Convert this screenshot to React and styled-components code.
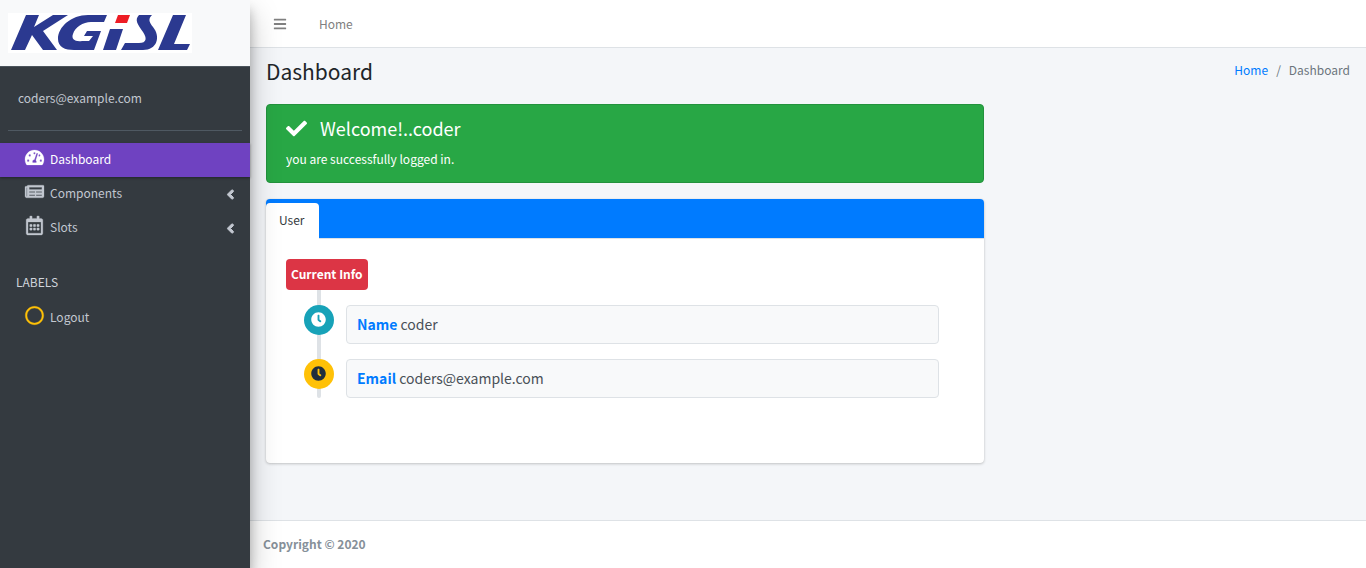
import React from "react";
import styled, { createGlobalStyle } from "styled-components";
import {
  FaAngleLeft,
  FaBars,
  FaCheck,
  FaClock,
  FaNewspaper,
  FaRegCalendarAlt,
  FaRegCircle,
  FaTachometerAlt,
} from "react-icons/fa";

const GlobalStyle = createGlobalStyle`
  *, *::before, *::after { box-sizing: border-box; }
  body {
    margin: 0;
    background: #f4f6f9;
    color: #212529;
    font-family: "Source Sans Pro", "Noto Sans CJK SC", "Noto Sans", sans-serif;
    font-size: 12px;
    line-height: 20px;
  }
  h1, h2, p, ul, ol { margin: 0; padding: 0; font-weight: 400; }
  ul, ol { list-style: none; }
  a { color: #007bff; text-decoration: none; }
  button { font: inherit; border: 0; background: none; padding: 0; cursor: pointer; }
`;

const Page = styled.div`
  display: flex;
  min-height: 100vh;
`;

const Sidebar = styled.aside`
  flex: 0 0 250px;
  background: #343a40;
  color: #c2c7d0;
  box-shadow: 0 14px 28px rgba(0, 0, 0, 0.25), 0 10px 10px rgba(0, 0, 0, 0.22);
  z-index: 1;
`;

const Brand = styled.a`
  display: block;
  height: 67px;
  padding: 13px 8px;
  background: #f8f9fa;
  border-bottom: 1px solid #4b545c;
`;

const Logo = styled.svg`
  display: block;
  width: 184px;
  height: 40px;
  background: #fff;
`;

const UserPanel = styled.div`
  margin: 0 8px 12px;
  padding: 21px 10px 22px;
  border-bottom: 1px solid #4f5962;
`;

const NavHeader = styled.h2`
  padding: 27px 16px 9px;
  font-size: 12px;
  line-height: 20px;
  color: #d0d4db;
`;

const NavLink = styled.a`
  display: flex;
  align-items: center;
  height: 34px;
  padding: 0 12px 0 24px;
  color: ${(p) => (p.$active ? "#fff" : "#c2c7d0")};
  background: ${(p) => (p.$active ? "#6f42c1" : "transparent")};
  box-shadow: ${(p) =>
    p.$active ? "0 1px 3px rgba(0, 0, 0, 0.12), 0 1px 2px rgba(0, 0, 0, 0.24)" : "none"};
`;

const NavText = styled.span`
  flex: 1;
  padding-bottom: 2px;
`;

const NavIcon = styled.i`
  display: flex;
  justify-content: center;
  width: 21px;
  margin-right: 5px;
  padding-bottom: 5px;
  font-size: 19px;
  color: ${(p) => p.$color || "inherit"};

  svg {
    flex: none;
    width: auto;
    overflow: visible;
    stroke-width: 8px;
  }
`;

const TreeArrow = styled(FaAngleLeft)`
  font-size: 15px;
  stroke-width: 34px;
`;

const Main = styled.div`
  flex: 1;
  min-width: 0;
  display: flex;
  flex-direction: column;
`;

const TopBar = styled.header`
  display: flex;
  align-items: center;
  gap: 32px;
  height: 48px;
  padding: 0 23px;
  background: #fff;
  border-bottom: 1px solid #dee2e6;
  color: #808080;

  a, button { color: inherit; }
  svg { display: block; }
`;

const Content = styled.main`
  flex: 1;
  padding: 8px 16px 16px;
`;

const TitleRow = styled.div`
  display: flex;
  justify-content: space-between;
  align-items: flex-start;
  margin-bottom: 16px;
`;

const Title = styled.h1`
  font-size: 21px;
  line-height: 30px;
  padding-bottom: 2px;
`;

const Breadcrumb = styled.ol`
  display: flex;
  padding-top: 4px;
  color: #6c757d;

  li + li::before { content: "/"; padding: 0 8px; }
`;

const Row = styled.div`
  display: flex;
  margin: 0 -8px;
`;

const Column = styled.div`
  flex: 0 0 66.6667%;
  padding: 0 7px 0 8px;
`;

const Alert = styled.section`
  margin-bottom: 16px;
  padding: 11px 19px 13px;
  color: #fff;
  background: #28a745;
  border: 1px solid #23923d;
  border-radius: 4px;
`;

const AlertTitle = styled.h2`
  display: flex;
  align-items: center;
  gap: 13px;
  margin-bottom: 9px;
  font-size: 18px;
  line-height: 24px;
`;

const Card = styled.section`
  background: #fff;
  border-radius: 4px;
  box-shadow: 0 0 1px rgba(0, 0, 0, 0.13), 0 1px 3px rgba(0, 0, 0, 0.2);
`;

const TabBar = styled.div`
  padding-top: 4px;
  background: #007bff;
  border-bottom: 1px solid #dee2e6;
  border-radius: 4px 4px 0 0;
`;

const Tab = styled.button`
  display: block;
  height: 36px;
  margin-bottom: -1px;
  padding: 0 14px 2px 13px;
  background: #fff;
  border-radius: 4px 4px 0 0;
  color: #343a40;
`;

const CardBody = styled.div`
  padding: 20px 20px 65px;
`;

const Timeline = styled.div`
  position: relative;

  &::before {
    content: "";
    position: absolute;
    top: 0;
    bottom: 0;
    left: 31px;
    width: 4px;
    border-radius: 4px;
    background: #dee2e6;
  }
`;

const TimeLabel = styled.div`
  position: relative;
  width: max-content;
  margin-bottom: 15px;
  padding: 5px 5px 6px;
  border-radius: 4px;
  background: #dc3545;
  color: #fff;
  font-weight: 700;
`;

const Entry = styled.div`
  position: relative;
  display: flex;
  align-items: flex-start;
  gap: 12px;
  margin: 0 25px 0 18px;

  & + & { margin-top: 15px; }
`;

const Dot = styled.span`
  display: grid;
  place-items: center;
  width: 30px;
  height: 30px;
  padding: 0 1px 1px 0;
  border-radius: 50%;
  font-size: 15px;
  color: ${(p) => (p.$warning ? "#1f2d3d" : "#fff")};
  background: ${(p) => (p.$warning ? "#ffc107" : "#17a2b8")};
`;

const EntryBox = styled.p`
  flex: 1;
  padding: 8px 10px;
  border: 1px solid #dee2e6;
  border-radius: 4px;
  background: #f8f9fa;
  color: #495057;
  font-size: 14px;
  line-height: 21px;

  b { color: #007bff; }
`;

const Footer = styled.footer`
  padding: 13px 13px 14px;
  background: #fff;
  border-top: 1px solid #dee2e6;
  color: #869099;
  font-weight: 700;
`;

function KgislLogo() {
  return (
    <Logo viewBox="0 0 184 40" role="img" aria-label="KGiSL">
      <g fill="#2b3990">
        <path d="M18 2H31L26 14L45 2H60L35 18L49 37H35L24 22L17 37H3Z" />
        <path d="M99 2H80C63 2 50 14 50 26C50 34 57 37 66 37H86L93 18H79L76 23H85L81 28H74C67 29 63 26 65 21C67 14 75 9 83 9H96Z" />
        <path d="M102 16H115L108 37H95Z" />
        <path d="M131 2H144C140 6 141 9 145 14C153 24 149 37 135 37H113L117 30H131C139 30 139 25 135 19C130 12 126 7 131 2Z" />
        <path d="M165 2H178L166 31H182L179 37H150Z" />
      </g>
      <path d="M110 2H122L119 10H107Z" fill="#ed1c24" />
    </Logo>
  );
}

const links = [
  { label: "Dashboard", Icon: FaTachometerAlt, active: true },
  { label: "Components", Icon: FaNewspaper, tree: true },
  { label: "Slots", Icon: FaRegCalendarAlt, tree: true },
];

export default function App() {
  return (
    <>
      <GlobalStyle />
      <Page>
        <Sidebar>
          <Brand href="#">
            <KgislLogo />
          </Brand>
          <UserPanel>coders@example.com</UserPanel>
          <nav>
            {links.map(({ label, Icon, active, tree }) => (
              <NavLink href="#" key={label} $active={active}>
                <NavIcon><Icon /></NavIcon>
                <NavText>{label}</NavText>
                {tree && <TreeArrow />}
              </NavLink>
            ))}
            <NavHeader>LABELS</NavHeader>
            <NavLink href="#">
              <NavIcon $color="#ffc107"><FaRegCircle /></NavIcon>
              <NavText>Logout</NavText>
            </NavLink>
          </nav>
        </Sidebar>
        <Main>
          <TopBar>
            <button type="button" aria-label="Toggle menu"><FaBars size={14} /></button>
            <a href="#">Home</a>
          </TopBar>
          <Content>
            <TitleRow>
              <Title>Dashboard</Title>
              <Breadcrumb>
                <li><a href="#">Home</a></li>
                <li>Dashboard</li>
              </Breadcrumb>
            </TitleRow>
            <Row>
              <Column>
                <Alert>
                  <AlertTitle><FaCheck size={21} />Welcome!..coder</AlertTitle>
                  <p>you are successfully logged in.</p>
                </Alert>
                <Card>
                  <TabBar role="tablist">
                    <Tab type="button" role="tab" aria-selected="true">User</Tab>
                  </TabBar>
                  <CardBody>
                    <Timeline>
                      <TimeLabel>Current Info</TimeLabel>
                      <Entry>
                        <Dot><FaClock /></Dot>
                        <EntryBox><b>Name</b> coder</EntryBox>
                      </Entry>
                      <Entry>
                        <Dot $warning><FaClock /></Dot>
                        <EntryBox><b>Email</b> coders@example.com</EntryBox>
                      </Entry>
                    </Timeline>
                  </CardBody>
                </Card>
              </Column>
            </Row>
          </Content>
          <Footer>Copyright © 2020</Footer>
        </Main>
      </Page>
    </>
  );
}
